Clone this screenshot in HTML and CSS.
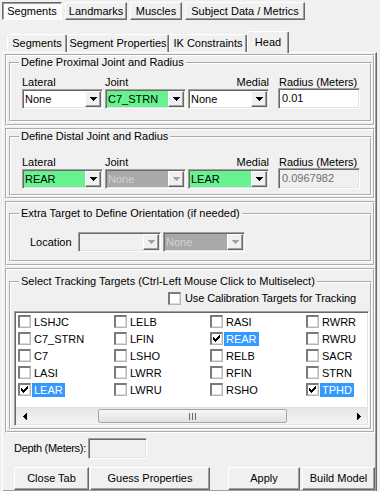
FILE: index.html
```html
<!DOCTYPE html>
<html lang="en">
<head>
    <meta charset="UTF-8">
    <meta name="viewport" content="width=device-width, initial-scale=1.0">
    <title>Head - Segments</title>
    <link rel="stylesheet" href="styles.css">
</head>
<body>
    <div class="top-tabs">
        <div class="top-tab active">Segments</div>
        <div class="top-tab">Landmarks</div>
        <div class="top-tab">Muscles</div>
        <div class="top-tab">Subject Data / Metrics</div>
    </div>

    <div class="sub-tabs">
        <div class="sub-tab">Segments</div>
        <div class="sub-tab">Segment Properties</div>
        <div class="sub-tab">IK Constraints</div>
        <div class="sub-tab active">Head</div>
    </div>

    <div class="tab-page">
        <!-- proximal joint -->
        <div class="panel">
            <fieldset class="group group-prox">
                <legend>Define Proximal Joint and Radius</legend>
                <div class="joint-grid">
                    <span>Lateral</span>
                    <span>Joint</span>
                    <span class="label-right">Medial</span>
                    <span class="label-radius">Radius (Meters)</span>

                    <div class="combo">
                        <span class="combo-text">None</span>
                        <span class="combo-btn"><svg width="7" height="4" viewBox="0 0 7 4"><path d="M0 0h7v1H0zM1 1h5v1H1zM2 2h3v1H2zM3 3h1v1H3z"/></svg></span>
                    </div>
                    <div class="combo green">
                        <span class="combo-text">C7_STRN</span>
                        <span class="combo-btn"><svg width="7" height="4" viewBox="0 0 7 4"><path d="M0 0h7v1H0zM1 1h5v1H1zM2 2h3v1H2zM3 3h1v1H3z"/></svg></span>
                    </div>
                    <div class="combo">
                        <span class="combo-text">None</span>
                        <span class="combo-btn"><svg width="7" height="4" viewBox="0 0 7 4"><path d="M0 0h7v1H0zM1 1h5v1H1zM2 2h3v1H2zM3 3h1v1H3z"/></svg></span>
                    </div>
                    <div class="textbox radius-box">0.01</div>
                </div>
            </fieldset>
        </div>

        <!-- distal joint -->
        <div class="panel">
            <fieldset class="group group-dist">
                <legend>Define Distal Joint and Radius</legend>
                <div class="joint-grid">
                    <span>Lateral</span>
                    <span>Joint</span>
                    <span class="label-right">Medial</span>
                    <span class="label-radius">Radius (Meters)</span>

                    <div class="combo green">
                        <span class="combo-text">REAR</span>
                        <span class="combo-btn"><svg width="7" height="4" viewBox="0 0 7 4"><path d="M0 0h7v1H0zM1 1h5v1H1zM2 2h3v1H2zM3 3h1v1H3z"/></svg></span>
                    </div>
                    <div class="combo grey">
                        <span class="combo-text">None</span>
                        <span class="combo-btn"><svg width="7" height="4" viewBox="0 0 7 4"><path d="M0 0h7v1H0zM1 1h5v1H1zM2 2h3v1H2zM3 3h1v1H3z"/></svg></span>
                    </div>
                    <div class="combo green">
                        <span class="combo-text">LEAR</span>
                        <span class="combo-btn"><svg width="7" height="4" viewBox="0 0 7 4"><path d="M0 0h7v1H0zM1 1h5v1H1zM2 2h3v1H2zM3 3h1v1H3z"/></svg></span>
                    </div>
                    <div class="textbox radius-box disabled">0.0967982</div>
                </div>
            </fieldset>
        </div>

        <!-- orientation -->
        <div class="panel">
            <fieldset class="group group-extra">
                <legend>Extra Target to Define Orientation (if needed)</legend>
                <div class="location-row">
                    <span class="location-label">Location</span>
                    <div class="combo off wide">
                        <span class="combo-text"></span>
                        <span class="combo-btn"><svg width="7" height="4" viewBox="0 0 7 4"><path d="M0 0h7v1H0zM1 1h5v1H1zM2 2h3v1H2zM3 3h1v1H3z"/></svg></span>
                    </div>
                    <div class="combo grey">
                        <span class="combo-text">None</span>
                        <span class="combo-btn"><svg width="7" height="4" viewBox="0 0 7 4"><path d="M0 0h7v1H0zM1 1h5v1H1zM2 2h3v1H2zM3 3h1v1H3z"/></svg></span>
                    </div>
                </div>
            </fieldset>
        </div>

        <!-- tracking targets -->
        <div class="panel">
            <fieldset class="group group-targets">
                <legend>Select Tracking Targets (Ctrl-Left Mouse Click to Multiselect)</legend>
                <label class="calib-row">
                    <span class="check"></span>
                    <span>Use Calibration Targets for Tracking</span>
                </label>
                <div class="listbox">
                    <div class="list-grid" id="targetList"></div>
                    <div class="hscroll">
                        <span class="sb-arrow"><svg width="4" height="7" viewBox="0 0 4 7"><path d="M3 0h1v7H3zM2 1h1v5H2zM1 2h1v3H1zM0 3h1v1H0z"/></svg></span>
                        <div class="sb-track">
                            <div class="sb-thumb"><svg width="7" height="7" viewBox="0 0 7 7"><path d="M0 0h1v7H0zM3 0h1v7H3zM6 0h1v7H6z"/></svg></div>
                        </div>
                        <span class="sb-arrow"><svg width="4" height="7" viewBox="0 0 4 7"><path d="M0 0h1v7H0zM1 1h1v5H1zM2 2h1v3H2zM3 3h1v1H3z"/></svg></span>
                    </div>
                </div>
            </fieldset>
        </div>

        <div class="depth-row">
            <span class="depth-label">Depth (Meters):</span>
            <div class="textbox disabled depth-box"></div>
        </div>

        <div class="button-row">
            <button class="win-btn btn-close">Close Tab</button>
            <button class="win-btn btn-guess">Guess Properties</button>
            <button class="win-btn btn-apply">Apply</button>
            <button class="win-btn btn-build">Build Model</button>
        </div>
    </div>

    <script>
        // tracking targets, column by column
        const targets = [
            ['LSHJC', false], ['C7_STRN', false], ['C7', false], ['LASI', false], ['LEAR', true],
            ['LELB', false], ['LFIN', false], ['LSHO', false], ['LWRR', false], ['LWRU', false],
            ['RASI', false], ['REAR', true], ['RELB', false], ['RFIN', false], ['RSHO', false],
            ['RWRR', false], ['RWRU', false], ['SACR', false], ['STRN', false], ['TPHD', true]
        ];

        const tick = '<svg width="7" height="7" viewBox="0 0 7 7"><path d="M6 0h1v3H6zM5 1h1v3H5zM4 2h1v3H4zM3 3h1v3H3zM2 4h1v3H2zM1 3h1v3H1zM0 2h1v3H0z"/></svg>';
        const list = document.getElementById('targetList');

        targets.forEach(function(t) {
            const item = document.createElement('div');
            item.className = 'list-item';
            item.innerHTML = '<span class="check">' + (t[1] ? tick : '') + '</span>' +
                '<span class="item-text' + (t[1] ? ' selected' : '') + '">' + t[0] + '</span>';
            list.appendChild(item);
        });
    </script>
</body>
</html>
```

FILE: styles.css
```css
* {
    box-sizing: border-box;
}

body {
    margin: 0;
    width: 380px;
    height: 491px;
    overflow: hidden;
    background: #f0f0f0;
    font-family: "Liberation Sans", Arial, sans-serif;
    font-size: 11px;
    line-height: 13px;
    color: #000;
}

/* outer tabs (button style) */
.top-tabs {
    display: flex;
    gap: 3px;
    padding: 2px 0 0 2px;
}

.top-tab {
    height: 18px;
    line-height: 16px;
    text-align: center;
    border: 1px solid;
    border-color: #fff #696969 #696969 #fff;
    box-shadow: inset -1px -1px 0 #a0a0a0;
}

.top-tab:nth-child(1) { width: 60px; }
.top-tab:nth-child(2) { width: 62px; }
.top-tab:nth-child(3) { width: 52px; }
.top-tab:nth-child(4) { width: 120px; }

.top-tab.active {
    background: #fbfbfb;
    border-color: #696969 #fff #fff #696969;
    box-shadow: inset 1px 1px 0 #a0a0a0;
}

/* inner tabs */
.sub-tabs {
    display: flex;
    align-items: flex-end;
    height: 21px;
    margin-top: 11px;
    padding-left: 7px;
}

.sub-tab {
    height: 18px;
    line-height: 17px;
    text-align: center;
    border: 1px solid;
    border-bottom: 0;
    border-color: #fff #696969 #fff #fff;
    box-shadow: inset -1px 0 0 #a0a0a0;
    border-radius: 2px 2px 0 0;
}

.sub-tab:nth-child(1) { width: 60px; }
.sub-tab:nth-child(2) { width: 102px; }
.sub-tab:nth-child(3) { width: 78px; }

.sub-tab.active {
    width: 42px;
    height: 22px;
    line-height: 20px;
    margin-bottom: -1px;
    position: relative;
    z-index: 1;
    background: #f0f0f0;
}

.tab-page {
    height: 440px;
    margin: 0 3px 0 2px;
    padding: 1px 1px 0 2px;
    border: 1px solid;
    border-color: #fff #696969 #696969 #fff;
    box-shadow: inset -1px -1px 0 #a0a0a0;
}

/* frames */
.panel {
    display: flex;
    flex-direction: column;
    border: 2px groove #fff;
}

.panel + .panel {
    margin-top: 2px;
}

.group {
    margin: 0 1px 2px 2px;
    padding: 0;
    min-width: 0;
    border: 2px groove #fff;
}

.group legend {
    margin-left: 8px;
    padding: 0 2px;
    white-space: nowrap;
}

.group-prox {
    padding: 7px 0 11px;
}

.group-dist {
    padding: 13px 0 5px;
    margin-bottom: 1px;
}

.group-extra {
    margin-top: 4px;
    padding: 12px 0 8px;
}

.group-targets {
    margin-top: 5px;
    margin-bottom: 1px;
    padding: 4px 1px 2px 0;
}

.joint-grid {
    display: grid;
    grid-template-columns: 81px 81px 81px 89px;
    grid-template-rows: 13px 20px;
    column-gap: 2px;
    margin-left: 11px;
    white-space: nowrap;
}

.label-right {
    text-align: right;
}

.label-radius {
    margin-left: 8px;
}

/* combo boxes */
.combo {
    display: flex;
    height: 20px;
    background: #fff;
    border: 1px solid;
    border-color: #a0a0a0 #fff #fff #a0a0a0;
    box-shadow: inset 1px 1px 0 #696969, inset -1px -1px 0 #e3e3e3;
    padding: 1px;
}

.combo-text {
    flex: 1;
    padding-left: 1px;
    line-height: 16px;
    white-space: nowrap;
    overflow: hidden;
}

.combo-btn {
    width: 16px;
    height: 16px;
    display: flex;
    align-items: center;
    justify-content: center;
    background: #f0f0f0;
    border: 1px solid;
    border-color: #fff #696969 #696969 #fff;
    box-shadow: inset -1px -1px 0 #a0a0a0;
}

.combo-btn svg {
    fill: #000;
}

.combo.green {
    background: #66f38f;
}

.combo.grey {
    background: #a9a9a9;
    color: #d2d2d2;
}

.combo.off {
    background: #f0f0f0;
}

.combo.grey .combo-btn svg,
.combo.off .combo-btn svg {
    fill: #a0a0a0;
}

.textbox {
    height: 21px;
    padding: 3px 0 0 3px;
    background: #fff;
    border: 1px solid;
    border-color: #a0a0a0 #fff #fff #a0a0a0;
    box-shadow: inset 1px 1px 0 #696969, inset -1px -1px 0 #e3e3e3;
}

.radius-box {
    margin: -1px 0 0 7px;
}

.textbox.disabled {
    background: #f0f0f0;
    color: #6d6d6d;
}

.location-row {
    display: flex;
    align-items: center;
    gap: 2px;
    margin-left: 19px;
}

.location-label {
    width: 46px;
}

.location-row .combo {
    width: 82px;
}

.location-row .combo.wide {
    width: 83px;
}

/* tracking targets */
.calib-row {
    display: flex;
    align-items: center;
    gap: 4px;
    height: 13px;
    padding-left: 157px;
    letter-spacing: -0.1px;
}

.check {
    width: 13px;
    height: 13px;
    flex: none;
    display: flex;
    align-items: center;
    justify-content: center;
    background: #fff;
    border: 1px solid;
    border-color: #7a7a7a #b5b5b5 #b5b5b5 #7a7a7a;
    box-shadow: inset 1px 1px 0 #7a7a7a, inset -1px -1px 0 #dcdcdc;
}

.listbox {
    display: flex;
    flex-direction: column;
    height: 115px;
    margin: 6px 0 0 3px;
    overflow: hidden;
    background: #fff;
    border: 1px solid;
    border-color: #a0a0a0 #fff #fff #a0a0a0;
    box-shadow: inset 1px 1px 0 #696969, inset -1px -1px 0 #e3e3e3;
    padding: 1px;
}

.list-grid {
    flex: 1;
    display: grid;
    grid-template-columns: repeat(4, 96px);
    grid-template-rows: repeat(5, 17px);
    grid-auto-flow: column;
    overflow: hidden;
}

.list-item {
    display: flex;
    align-items: center;
    padding-left: 2px;
}

.item-text {
    height: 14px;
    line-height: 14px;
    margin-left: 1px;
    padding: 0 2px;
}

.item-text.selected {
    background: #3399ff;
    color: #fff;
}

.hscroll {
    display: flex;
    height: 17px;
    flex: none;
    background: linear-gradient(#e6e6e6, #f4f4f4);
    border-top: 1px solid #e0e0e0;
}

.sb-arrow {
    width: 17px;
    display: flex;
    align-items: center;
    justify-content: center;
}

.sb-track {
    flex: 1;
    padding: 1px 0;
}

.sb-thumb {
    width: 189px;
    height: 100%;
    margin-left: 65px;
    display: flex;
    align-items: center;
    justify-content: center;
    border: 1px solid #a6a6a6;
    border-radius: 2px;
    background: linear-gradient(#f6f6f6, #e2e2e2);
}

.sb-thumb svg {
    fill: #6a6a6a;
}

/* bottom area */
.depth-row {
    display: flex;
    align-items: center;
    margin-top: 5px;
    padding-left: 9px;
}

.depth-label {
    width: 74px;
    white-space: nowrap;
    letter-spacing: -0.3px;
}

.depth-box {
    width: 59px;
}

.button-row {
    display: flex;
    margin-top: 8px;
    padding-left: 9px;
}

.win-btn {
    height: 23px;
    padding: 0;
    font: inherit;
    color: #000;
    background: #f0f0f0;
    border: 1px solid;
    border-color: #fff #696969 #696969 #fff;
    box-shadow: inset -1px -1px 0 #a0a0a0;
}

.btn-close { width: 75px; }
.btn-guess { width: 120px; margin-left: 1px; }
.btn-apply { width: 72px; margin-left: auto; }
.btn-build { width: 73px; margin-left: 2px; }
```
